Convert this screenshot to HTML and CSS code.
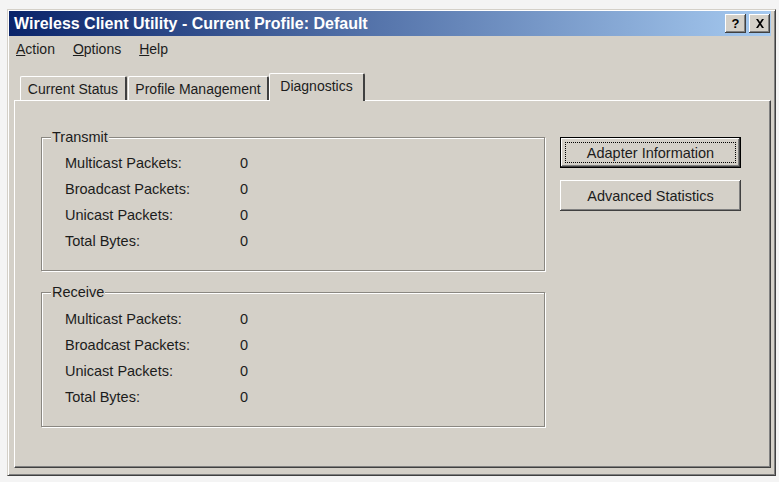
FILE: index.html
```html
<!DOCTYPE html>
<html lang="en">
<head>
    <meta charset="UTF-8">
    <title>Wireless Client Utility</title>
    <link rel="stylesheet" href="styles.css">
</head>
<body>
    <div class="window">
        <div class="titlebar">
            <span class="title">Wireless Client Utility - Current Profile: Default</span>
            <div class="caption-buttons">
                <button class="caption-btn help-btn">?</button>
                <button class="caption-btn close-btn">
                    <svg width="10" height="9" viewBox="0 0 10 9"><path d="M1 0h2l2 3 2-3h2L6 4.5 9 9H7L5 6 3 9H1l3-4.5z" fill="#000"/></svg>
                </button>
            </div>
        </div>

        <div class="menubar">
            <span class="menu-item"><u>A</u>ction</span>
            <span class="menu-item"><u>O</u>ptions</span>
            <span class="menu-item"><u>H</u>elp</span>
        </div>

        <div class="content">
            <div class="tabs">
                <div class="tab tab-status">Current Status</div>
                <div class="tab tab-profile">Profile Management</div>
                <div class="tab tab-diag active">Diagnostics</div>
            </div>

            <div class="panel">
                <div class="groups">
                    <fieldset class="group">
                        <legend>Transmit</legend>
                        <div class="row"><span>Multicast Packets:</span><span>0</span></div>
                        <div class="row"><span>Broadcast Packets:</span><span>0</span></div>
                        <div class="row"><span>Unicast Packets:</span><span>0</span></div>
                        <div class="row"><span>Total Bytes:</span><span>0</span></div>
                    </fieldset>
                    <fieldset class="group">
                        <legend>Receive</legend>
                        <div class="row"><span>Multicast Packets:</span><span>0</span></div>
                        <div class="row"><span>Broadcast Packets:</span><span>0</span></div>
                        <div class="row"><span>Unicast Packets:</span><span>0</span></div>
                        <div class="row"><span>Total Bytes:</span><span>0</span></div>
                    </fieldset>
                </div>
                <div class="actions">
                    <button class="btn default">Adapter Information</button>
                    <button class="btn">Advanced Statistics</button>
                </div>
            </div>
        </div>
    </div>
</body>
</html>
```

FILE: styles.css
```css
body {
    margin: 0;
    background: #f4f4f4;
    font-family: 'Liberation Sans', Arial, sans-serif;
    font-size: 14.5px;
    color: #1c1c1c;
}

.window {
    margin: 9px 3px 0 7px;
    height: 467px;
    box-sizing: border-box;
    background: #d4d0c8;
    border: 1px solid;
    border-color: #d4d0c8 #404040 #404040 #d4d0c8;
    box-shadow: inset 1px 1px 0 #fff, inset -1px -1px 0 #808080;
    padding: 1px 4px 0 1px;
    display: flex;
    flex-direction: column;
}

.titlebar {
    height: 25px;
    display: flex;
    align-items: center;
    justify-content: space-between;
    padding: 0 0 0 5px;
    background: linear-gradient(to right, #0a246a, #a6caf0);
}

.title {
    color: #fff;
    font-weight: bold;
    font-size: 16px;
}

.caption-buttons {
    display: flex;
    gap: 3px;
    padding-right: 1px;
}

.caption-btn {
    width: 21px;
    height: 19px;
    padding: 0;
    border: none;
    background: #d4d0c8;
    box-shadow: inset -1px -1px #404040, inset 1px 1px #fff, inset -2px -2px #808080;
    font-family: 'Liberation Sans', sans-serif;
    font-weight: bold;
    font-size: 13px;
    display: flex;
    align-items: center;
    justify-content: center;
}

.menubar {
    height: 26px;
    display: flex;
    align-items: center;
    gap: 18px;
    padding-left: 7px;
    font-size: 14px;
}

.content {
    flex: 1;
    display: flex;
    flex-direction: column;
    padding: 11px 0 7px 5px;
}

.tabs {
    display: flex;
    align-items: flex-end;
    padding-left: 6px;
    height: 27px;
    position: relative;
    z-index: 1;
}

.tab {
    height: 24px;
    box-sizing: border-box;
    display: flex;
    align-items: center;
    justify-content: center;
    border-top: 1px solid #fff;
    border-left: 1px solid #fff;
    border-right: 2px solid #404040;
    border-radius: 2px 2px 0 0;
    font-size: 14px;
}

.tab-status { width: 107px; }
.tab-profile { width: 141px; margin-left: 1px; }
.tab-diag { width: 96px; }

.tab.active {
    height: 28px;
    margin-bottom: -1px;
    padding-bottom: 4px;
    background: #d4d0c8;
}

.panel {
    flex: 1;
    display: flex;
    gap: 15px;
    padding: 29px 0 0 26px;
    border: 1px solid;
    border-color: #fff #404040 #404040 #fff;
    box-shadow: inset -1px -1px 0 #808080;
}

.groups {
    width: 504px;
    display: flex;
    flex-direction: column;
    gap: 14px;
}

.group {
    margin: 0;
    padding: 6px 0 16px 23px;
    border: 1px solid #8a8781;
    box-shadow: inset 1px 1px 0 #fff, 1px 1px 0 #fff;
}

.group + .group {
    padding-top: 7px;
}

.group legend {
    margin-left: -14px;
    padding: 0 1px;
    line-height: 14px;
    background: #d4d0c8;
}

.row {
    display: grid;
    grid-template-columns: 175px auto;
    height: 26px;
    align-items: center;
}

.actions {
    padding-top: 7px;
    display: flex;
    flex-direction: column;
    gap: 12px;
}

.btn {
    width: 181px;
    height: 31px;
    font-family: 'Liberation Sans', Arial, sans-serif;
    font-size: 14.5px;
    color: #1c1c1c;
    background: #d4d0c8;
    border: none;
    box-shadow: inset -1px -1px #404040, inset 1px 1px #fff, inset -2px -2px #808080;
}

.btn.default {
    border: 1px solid #000;
    outline: 1px dotted #000;
    outline-offset: -6px;
}
```
